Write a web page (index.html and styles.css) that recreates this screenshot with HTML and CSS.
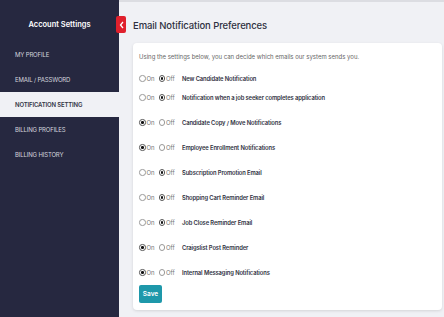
FILE: index.html
```html
<!DOCTYPE html>
<html>
	<head>
		<meta charset="utf-8">
		<title>Account Settings</title>
		<link rel="stylesheet" href="styles.css">
	</head>
	<body>
		<div class="page">
			<div class="side">
				<div class="side_hd">Account Settings</div>
				<ul class="menu">
					<li>MY PROFILE</li>
					<li>EMAIL / PASSWORD</li>
					<li class="on">NOTIFICATION SETTING</li>
					<li>BILLING PROFILES</li>
					<li>BILLING HISTORY</li>
				</ul>
				<i class="toggle">
					<svg width="5" height="8" viewBox="0 0 5 8"><path d="M4 1 L1.5 4 L4 7" fill="none" stroke="#fff" stroke-width="1.3"/></svg>
				</i>
			</div>
			<div class="main">
				<h1>Email Notification Preferences</h1>
				<div class="card">
					<p class="intro">Using the settings below, you can decide which emails our system sends you.</p>
					<div class="group">
						<div class="row tight">
							<span class="radio"></span><span class="opt">On</span>
							<span class="radio checked"></span><span class="opt">Off</span>
							<b>New Candidate Notification</b>
						</div>
						<div class="row tight">
							<span class="radio"></span><span class="opt">On</span>
							<span class="radio checked"></span><span class="opt">Off</span>
							<b>Notification when a job seeker completes application</b>
						</div>
					</div>
					<div class="row">
						<span class="radio checked"></span><span class="opt">On</span>
						<span class="radio"></span><span class="opt">Off</span>
						<b>Candidate Copy / Move Notifications</b>
					</div>
					<div class="row">
						<span class="radio checked"></span><span class="opt">On</span>
						<span class="radio"></span><span class="opt">Off</span>
						<b>Employee Enrollment Notifications</b>
					</div>
					<div class="row">
						<span class="radio"></span><span class="opt">On</span>
						<span class="radio checked"></span><span class="opt">Off</span>
						<b>Subscription Promotion Email</b>
					</div>
					<div class="row">
						<span class="radio"></span><span class="opt">On</span>
						<span class="radio checked"></span><span class="opt">Off</span>
						<b>Shopping Cart Reminder Email</b>
					</div>
					<div class="row">
						<span class="radio"></span><span class="opt">On</span>
						<span class="radio checked"></span><span class="opt">Off</span>
						<b>Job Close Reminder Email</b>
					</div>
					<div class="row">
						<span class="radio checked"></span><span class="opt">On</span>
						<span class="radio"></span><span class="opt">Off</span>
						<b>Craigslist Post Reminder</b>
					</div>
					<div class="row">
						<span class="radio checked"></span><span class="opt">On</span>
						<span class="radio"></span><span class="opt">Off</span>
						<b>Internal Messaging Notifications</b>
					</div>
					<button type="button" class="save">Save</button>
				</div>
			</div>
		</div>
	</body>
</html>
```

FILE: styles.css
```css
*{
	margin: 0;
	padding: 0;
	box-sizing: border-box;
}
body{
	font-family: Inter, "Noto Sans", sans-serif;
	background-color: #f0f1f5;
}
.page{
	display: flex;
	height: 317px;
}
.side{
	position: relative;
	width: 119px;
	background-color: #262840;
	color: #d4d5de;
}
.side_hd{
	height: 42px;
	padding-top: 20px;
	text-align: center;
	font-size: 7.5px;
	font-weight: 600;
	color: #fff;
}
.menu{
	list-style: none;
}
.menu li{
	height: 25px;
	padding-left: 15px;
	line-height: 25px;
	font-size: 6px;
	letter-spacing: -0.15px;
}
.menu li.on{
	background-color: #f0f1f5;
	color: #333645;
	font-weight: 600;
}
.toggle{
	position: absolute;
	top: 16px;
	right: -7px;
	display: flex;
	align-items: center;
	justify-content: center;
	width: 10px;
	height: 17px;
	background-color: #e0202c;
	border-radius: 2px;
}
.main{
	flex: 1;
	padding: 18px 2px 0 14px;
	border-top: 2px solid #dcdde2;
}
.main h1{
	height: 23px;
	font-size: 9.5px;
	font-weight: 500;
	letter-spacing: -0.1px;
	color: #2e3040;
}
.card{
	height: 267px;
	padding: 10px 6px 0;
	background-color: #fff;
	border-radius: 4px;
	box-shadow: 0 1px 3px rgba(0,0,0,.12);
}
.intro{
	height: 16px;
	font-size: 6px;
	color: #666;
}
.group{
	margin-bottom: 3px;
}
.row{
	display: flex;
	align-items: center;
	height: 25px;
	font-size: 6px;
}
.row.tight{
	height: 19px;
}
.radio{
	width: 6.5px;
	height: 6.5px;
	border: 0.8px solid #999;
	border-radius: 50%;
	position: relative;
}
.radio.checked{
	border-color: #555;
}
.radio.checked::after{
	content: "";
	position: absolute;
	top: 1.2px;
	left: 1.2px;
	width: 2.6px;
	height: 2.6px;
	border-radius: 50%;
	background-color: #111;
}
.opt{
	width: 12px;
	margin-left: 1px;
	color: #777;
}
.row b{
	margin-left: 4px;
	font-size: 5.8px;
	font-weight: 600;
	color: #2e3040;
	letter-spacing: -0.1px;
}
.save{
	display: block;
	width: 23px;
	height: 18px;
	border: 0;
	border-radius: 2px;
	background-color: #1e98aa;
	color: #fff;
	font-family: inherit;
	font-size: 6.5px;
	font-weight: 600;
}
```
